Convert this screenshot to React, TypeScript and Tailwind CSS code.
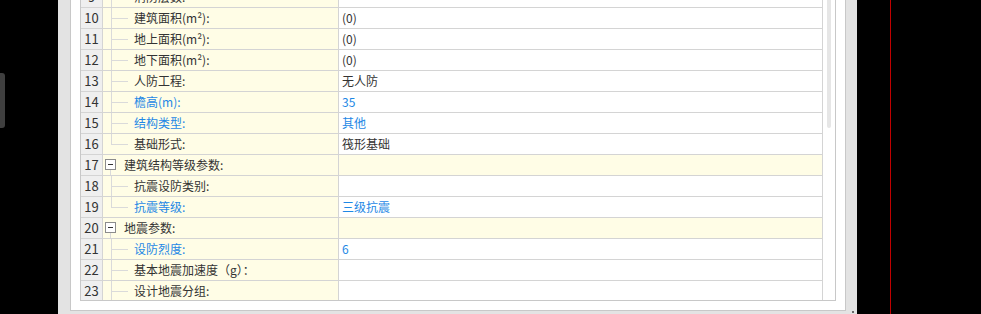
import React from 'react';

type Row = {
  n: number;
  name: string;
  value?: string;
  blue?: boolean;
  group?: boolean;
  last?: boolean;
};

const rows: Row[] = [
  { n: 9, name: '消防层数:' },
  { n: 10, name: '建筑面积(m²):', value: '(0)' },
  { n: 11, name: '地上面积(m²):', value: '(0)' },
  { n: 12, name: '地下面积(m²):', value: '(0)' },
  { n: 13, name: '人防工程:', value: '无人防' },
  { n: 14, name: '檐高(m):', value: '35', blue: true },
  { n: 15, name: '结构类型:', value: '其他', blue: true },
  { n: 16, name: '基础形式:', value: '筏形基础', last: true },
  { n: 17, name: '建筑结构等级参数:', group: true },
  { n: 18, name: '抗震设防类别:' },
  { n: 19, name: '抗震等级:', value: '三级抗震', blue: true, last: true },
  { n: 20, name: '地震参数:', group: true },
  { n: 21, name: '设防烈度:', value: '6', blue: true },
  { n: 22, name: '基本地震加速度（g）：' },
  { n: 23, name: '设计地震分组:' },
];

const font = { fontFamily: '"Noto Sans CJK SC", "Microsoft YaHei", sans-serif' };

const TreeCell: React.FC<{ row: Row }> = ({ row }) => {
  if (row.group) {
    return (
      <div className="relative w-[21px] h-full shrink-0">
        <div className="absolute left-[2px] top-[4px] w-[11px] h-[11px] border border-[#8c8c8c] bg-white flex items-center justify-center">
          <div className="w-[5px] h-px bg-[#333]" />
        </div>
        <div className="absolute left-[7px] top-[15px] bottom-0 w-px bg-[#dadada]" />
      </div>
    );
  }
  return (
    <div className="relative w-[31px] h-full shrink-0">
      <div className={`absolute left-[8px] top-0 w-px bg-[#dadada] ${row.last ? 'h-[10px]' : 'h-full'}`} />
      <div className="absolute left-[8px] top-[10px] w-[17px] h-px bg-[#dadada]" />
    </div>
  );
};

export default function App() {
  return (
    <div className="w-[981px] h-[314px] bg-black flex overflow-hidden text-[12px]" style={font}>
      {/* left dark strip with tab */}
      <div className="w-[58px] shrink-0 flex flex-col">
        <div className="mt-[73px] w-[5px] h-[55px] bg-[#3f3f3f] rounded-r-[3px]" />
      </div>

      {/* window frame */}
      <div className="w-[799px] shrink-0 h-full bg-[#e3e3e3] pl-[12px] pr-[11px] pb-[3px] flex flex-col relative">
        <div className="flex-1 min-h-0 bg-white border border-t-0 border-[#c8c8c8] px-[9px] pb-[9px] flex flex-col">
          <div className="flex-1 min-h-0 flex border border-t-0 border-[#c8c8c8]">
            {/* table viewport */}
            <div className="w-[742px] shrink-0 h-full overflow-hidden border-r border-[#d4d4d4]">
              <div className="-mt-[13px]">
                {rows.map((row) => (
                  <div
                    key={row.n}
                    className="h-[21px] flex border-b border-[#d4d4d4]"
                  >
                    <div className="w-[22px] shrink-0 bg-[#efefef] border-r border-[#d4d4d4] flex items-center justify-center text-[13px] text-[#333]">
                      {row.n}
                    </div>
                    <div className="w-[236px] shrink-0 bg-[#fffde6] border-r border-[#d4d4d4] flex items-center">
                      <TreeCell row={row} />
                      <span className={`whitespace-nowrap ${row.blue ? 'text-[#1e88e5]' : 'text-[#333]'}`}>
                        {row.name}
                      </span>
                    </div>
                    <div
                      className={`flex-1 flex items-center pl-[3px] ${row.group ? 'bg-[#fffde6]' : 'bg-white'} ${row.blue ? 'text-[#1e88e5]' : 'text-[#333]'}`}
                    >
                      {row.value}
                    </div>
                  </div>
                ))}
              </div>
            </div>
            {/* scrollbar */}
            <div className="w-[12px] shrink-0 bg-white pl-[4px]">
              <div className="w-[4px] h-[128px] bg-[#e6e6e6] rounded-b-[2px]" />
            </div>
          </div>
        </div>
        <div className="absolute right-[3px] bottom-[1px] w-[2px] h-[2px] bg-[#6a6a6a]" />
      </div>

      {/* right black area with red guide */}
      <div className="flex-1 flex">
        <div className="ml-[33px] w-px h-full bg-[#c00000]" />
      </div>
    </div>
  );
}
